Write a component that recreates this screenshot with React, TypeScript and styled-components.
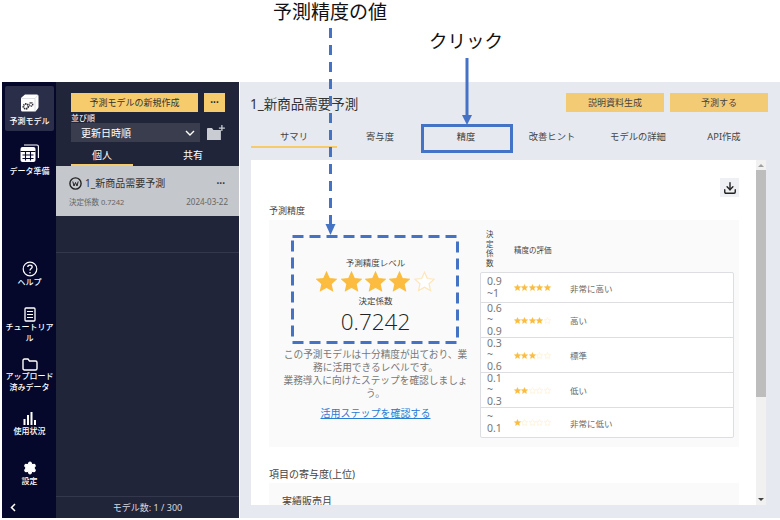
import React from "react";
import styled, { createGlobalStyle } from "styled-components";
import { Download, Settings } from "lucide-react";

const FONT = `"Noto Sans", "Noto Sans CJK JP", sans-serif`;

const tabs = ["サマリ", "寄与度", "精度", "改善ヒント", "モデルの詳細", "API作成"];

const levels = [
  { range: ["0.9", "~1"], stars: 5, label: "非常に高い" },
  { range: ["0.6", "~", "0.9"], stars: 4, label: "高い" },
  { range: ["0.3", "~", "0.6"], stars: 3, label: "標準" },
  { range: ["0.1", "~", "0.3"], stars: 2, label: "低い" },
  { range: ["~", "0.1"], stars: 1, label: "非常に低い" },
];

const ModelIcon = () => (
  <svg width="19" height="18" viewBox="0 0 19 18">
    <path d="M1 4.5 Q1 3.5 2 3 L5 0.5 H17 Q18.5 0.5 18.5 2 V13 Q18.5 14 17.5 15 L15.5 17.5 H2.5 Q1 17.5 1 16 Z" fill="#fff" />
    <path d="M1.5 4.5 H15 L18 1 M15 4.5 V17" stroke="#c8cad2" strokeWidth="0.6" fill="none" />
    <circle cx="5.8" cy="12.4" r="2.4" fill="none" stroke="#2c2c34" strokeWidth="1.8" strokeDasharray="1.3 0.6" />
    <circle cx="11" cy="10.4" r="1.7" fill="none" stroke="#2c2c34" strokeWidth="1.4" strokeDasharray="1 0.5" />
  </svg>
);

const GridIcon = () => (
  <svg width="19" height="18" viewBox="0 0 19 18" fill="none">
    <path d="M4 1 H17 Q18.4 1 18.4 2.5 V14" stroke="#fff" strokeWidth="1.1" />
    <rect x="0.5" y="3" width="15" height="15" rx="2" fill="#fff" />
    <path d="M0.5 7.5 H15.5 M2.5 11 H13.5 M2.5 14.5 H13.5 M5.5 7 V16.5 M10.5 7 V16.5" stroke="#05082a" strokeWidth="1.1" />
  </svg>
);

const HelpIcon = () => (
  <svg width="16" height="16" viewBox="0 0 16 16" fill="none" stroke="#fff">
    <circle cx="8" cy="8" r="6.8" strokeWidth="1.2" />
    <path d="M5.8 6 C5.8 3.6 10.2 3.6 10.2 6 C10.2 7.6 8 7.6 8 9.6" strokeWidth="1.3" />
    <circle cx="8" cy="11.8" r="0.8" fill="#fff" stroke="none" />
  </svg>
);

const DocIcon = () => (
  <svg width="12" height="15" viewBox="0 0 12 15" fill="none" stroke="#fff">
    <rect x="1" y="1" width="10" height="13" rx="1" strokeWidth="1.3" />
    <path d="M3 4.5 H9 M3 7.5 H9 M3 10.5 H9" strokeWidth="1.2" />
  </svg>
);

const FolderIcon = () => (
  <svg width="16" height="13" viewBox="0 0 16 13" fill="none" stroke="#fff" strokeWidth="1.4">
    <path d="M1 2.5 Q1 1 2.5 1 H6 L7.5 3 H13.5 Q15 3 15 4.5 V10.5 Q15 12 13.5 12 H2.5 Q1 12 1 10.5 Z" />
  </svg>
);

const BarsIcon = () => (
  <svg width="14" height="13" viewBox="0 0 14 13" fill="#fff">
    <rect x="0.5" y="7" width="2" height="6" />
    <rect x="4" y="3" width="2" height="10" />
    <rect x="7.5" y="0" width="2" height="13" />
    <rect x="11" y="8" width="2" height="5" />
  </svg>
);

const BackIcon = () => (
  <svg width="6" height="9" viewBox="0 0 6 9" fill="none" stroke="#fff" strokeWidth="1.5">
    <path d="M5 1 L1.5 4.5 L5 8" />
  </svg>
);

const CaretIcon = () => (
  <svg width="10" height="6" viewBox="0 0 10 6" fill="none" stroke="#fff" strokeWidth="1.4">
    <path d="M1 1 L5 5 L9 1" />
  </svg>
);

const FolderPlusIcon = () => (
  <svg width="19" height="15" viewBox="0 0 19 15" fill="#c9ccd2">
    <path d="M1 4 Q1 3 2 3 H6 L7.5 5 H15 V15 H1 Z" />
    <path d="M16 0 V6 M13 3 H19" stroke="#c9ccd2" strokeWidth="1.3" />
  </svg>
);

const ModelStatusIcon = () => (
  <svg width="13" height="13" viewBox="0 0 13 13" fill="none" stroke="#222">
    <circle cx="6.5" cy="6.5" r="5.6" strokeWidth="1.4" />
    <path d="M3.8 4.5 L5 9 L6.5 5.5 L8 9 L9.2 4.5" strokeWidth="1" />
  </svg>
);

const Star = ({ size, filled }: { size: number; filled: boolean }) => (
  <svg width={size} height={size} viewBox="0 0 24 24">
    <path
      d="M12 1.5 L15.2 8.6 L23 9.4 L17.2 14.6 L18.8 22.3 L12 18.4 L5.2 22.3 L6.8 14.6 L1 9.4 L8.8 8.6 Z"
      fill={filled ? "#fbbc3f" : "#fff"}
      stroke={filled ? "#fbbc3f" : "#fde6b8"}
      strokeWidth="1.4"
    />
  </svg>
);

const Annotations = () => (
  <>
    <NoteText $left={273} $top={-1} $size={19}>予測精度の値</NoteText>
    <NoteText $left={429} $top={28} $size={18.5}>クリック</NoteText>
    <NoteLines width="780" height="350" viewBox="0 0 780 350">
      <path d="M330.5 28 V226" stroke="#4472c4" strokeWidth="3" strokeDasharray="10 7" />
      <path d="M325.5 224 H335.5 L330.5 235 Z" fill="#4472c4" />
      <path d="M467 58 V116" stroke="#4472c4" strokeWidth="3" />
      <path d="M462 115 H472 L467 125 Z" fill="#4472c4" />
      <rect x="292.5" y="236.5" width="165" height="106" fill="none" stroke="#4472c4" strokeWidth="3" strokeDasharray="11 6" />
    </NoteLines>
    <ClickBox />
  </>
);

export default function App() {
  return (
    <Page>
      <GlobalStyle />
      <AppFrame>
        <SideNav>
          <NavGroup>
            <NavItem $active $height={45} $gap={4}><ModelIcon /><span>予測モデル</span></NavItem>
            <NavItem $height={33} $gap={4}><GridIcon /><span>データ準備</span></NavItem>
          </NavGroup>
          <NavBottom>
            <NavItem $height={32}><HelpIcon /><span>ヘルプ</span></NavItem>
            <NavItem $height={37}><DocIcon /><span>チュートリアル</span></NavItem>
            <NavItem $height={40}><FolderIcon /><span>アップロード<br />済みデータ</span></NavItem>
            <NavItem $height={35} $gap={1}><BarsIcon /><span>使用状況</span></NavItem>
            <NavItem $height={26} $gap={1}><Settings size={14} fill="#fff" color="#fff" /><span>設定</span></NavItem>
          </NavBottom>
          <Collapse><BackIcon /></Collapse>
        </SideNav>

        <ListPanel>
          <ListTop>
            <NewRow>
              <NewButton>予測モデルの新規作成</NewButton>
              <MoreButton>•••</MoreButton>
            </NewRow>
            <SortLabel>並び順</SortLabel>
            <SortRow>
              <SortSelect>更新日時順<CaretIcon /></SortSelect>
              <FolderPlusIcon />
            </SortRow>
            <OwnerTabs>
              <OwnerTab $active>個人</OwnerTab>
              <OwnerTab>共有</OwnerTab>
            </OwnerTabs>
          </ListTop>
          <ModelCard>
            <ModelName>
              <ModelStatusIcon />
              <span>1_新商品需要予測</span>
              <CardDots>•••</CardDots>
            </ModelName>
            <ModelMeta>
              <span>決定係数 0.7242</span>
              <MetaDate>2024-03-22</MetaDate>
            </ModelMeta>
          </ModelCard>
          <ListRule />
          <ListFooter>モデル数: 1 / 300</ListFooter>
        </ListPanel>

        <Main>
          <MainHeader>
            <Title>1_新商品需要予測</Title>
            <HeaderButton>説明資料生成</HeaderButton>
            <HeaderButton>予測する</HeaderButton>
          </MainHeader>
          <TabBar>
            {tabs.map((t, i) => (
              <Tab key={t} $active={i === 0}>{t}</Tab>
            ))}
          </TabBar>
          <Card>
            <CardBody>
              <ToolRow>
                <IconButton><Download size={14} color="#222" strokeWidth={2.4} /></IconButton>
              </ToolRow>
              <SectionTitle>予測精度</SectionTitle>
              <AccuracyPanel>
                <Summary>
                  <ValueArea>
                    <SmallLabel>予測精度レベル</SmallLabel>
                    <Stars>
                      {[1, 2, 3, 4, 5].map((n) => (
                        <Star key={n} size={21} filled={n <= 4} />
                      ))}
                    </Stars>
                    <SmallLabel>決定係数</SmallLabel>
                    <BigValue>0.7242</BigValue>
                  </ValueArea>
                  <Description>
                    この予測モデルは十分精度が出ており、業務に活用できるレベルです。
                    <br />
                    業務導入に向けたステップを確認しましょう。
                  </Description>
                  <StepLink>活用ステップを確認する</StepLink>
                </Summary>
                <LevelTable>
                  <LevelHead>
                    <HeadRange>決定係数</HeadRange>
                    <span>精度の評価</span>
                  </LevelHead>
                  <LevelBody>
                    {levels.map((l) => (
                      <LevelRow key={l.label} $lines={l.range.length}>
                        <RangeCell>
                          {l.range.map((r, i) => (
                            <div key={i}>{r}</div>
                          ))}
                        </RangeCell>
                        <MiniStars>
                          {[1, 2, 3, 4, 5].map((n) => (
                            <Star key={n} size={7} filled={n <= l.stars} />
                          ))}
                        </MiniStars>
                        <LevelLabel>{l.label}</LevelLabel>
                      </LevelRow>
                    ))}
                  </LevelBody>
                </LevelTable>
              </AccuracyPanel>
              <SecondTitle>項目の寄与度(上位)</SecondTitle>
              <ContribPanel>実績販売月</ContribPanel>
            </CardBody>
            <ScrollBar>
              <ScrollArrow $up />
              <ScrollThumb />
              <ScrollArrow />
            </ScrollBar>
          </Card>
        </Main>
      </AppFrame>
      <Annotations />
    </Page>
  );
}

const GlobalStyle = createGlobalStyle`
  html, body {
    margin: 0;
    padding: 0;
    background: #fff;
    font-family: ${FONT};
    overflow: hidden;
  }
`;

const Page = styled.div`
  position: relative;
  width: 780px;
  height: 520px;
  padding: 82px 0 2px 2px;
  box-sizing: border-box;
  overflow: hidden;
`;

const AppFrame = styled.div`
  display: flex;
  height: 436px;
  width: 778px;
`;

const SideNav = styled.nav`
  width: 54px;
  flex-shrink: 0;
  background: #05082a;
  display: flex;
  flex-direction: column;
  padding-top: 4px;
  box-sizing: border-box;
`;

const NavGroup = styled.div`
  display: flex;
  flex-direction: column;
  gap: 13px;
`;

const NavBottom = styled.div`
  display: flex;
  flex-direction: column;
  gap: 14px;
  margin-top: 84px;
`;

const NavItem = styled.div<{ $active?: boolean; $height: number; $gap?: number }>`
  width: 49px;
  height: ${(p) => p.$height}px;
  margin-left: 3px;
  background: ${(p) => (p.$active ? "#2a2e48" : "transparent")};
  border-radius: 2px;
  color: #fff;
  font-size: 8px;
  line-height: 10.5px;
  font-weight: 500;
  text-align: center;
  display: flex;
  flex-direction: column;
  align-items: center;
  padding-top: ${(p) => (p.$active ? 8 : 0)}px;
  box-sizing: border-box;
  gap: ${(p) => p.$gap ?? 0}px;
  svg {
    flex-shrink: 0;
  }
  span {
    display: block;
    width: 48px;
  }
`;

const Collapse = styled.div`
  margin-top: auto;
  height: 22px;
  padding-left: 8px;
  display: flex;
  align-items: center;
`;

const ListPanel = styled.aside`
  width: 183px;
  flex-shrink: 0;
  background: #212539;
  display: flex;
  flex-direction: column;
`;

const ListTop = styled.div`
  padding: 11px 14px 0 15px;
`;

const NewRow = styled.div`
  display: flex;
  gap: 6px;
`;

const NewButton = styled.div`
  width: 127px;
  height: 19px;
  background: #f5cb6c;
  color: #333;
  font-size: 9px;
  line-height: 19px;
  text-align: center;
`;

const MoreButton = styled.div`
  width: 21px;
  height: 19px;
  background: #f5cb6c;
  color: #222;
  font-size: 7.5px;
  line-height: 19px;
  text-align: center;
`;

const SortLabel = styled.div`
  color: #fff;
  font-size: 8px;
  line-height: 10px;
  margin-top: 1px;
`;

const SortRow = styled.div`
  display: flex;
  align-items: center;
  gap: 6px;
`;

const SortSelect = styled.div`
  width: 130px;
  height: 19px;
  background: #3a3d4d;
  color: #fff;
  font-size: 10px;
  box-sizing: border-box;
  padding: 0 5px 0 10px;
  display: flex;
  align-items: center;
  justify-content: space-between;
`;

const OwnerTabs = styled.div`
  display: flex;
  margin-top: 4px;
  width: 154px;
`;

const OwnerTab = styled.div<{ $active?: boolean }>`
  width: ${(p) => (p.$active ? 62 : 92)}px;
  height: 20px;
  box-sizing: border-box;
  color: #fff;
  font-size: 10px;
  line-height: 18px;
  text-align: center;
  padding-left: ${(p) => (p.$active ? 0 : 28)}px;
  border-bottom: 2px solid ${(p) => (p.$active ? "#f5cb6c" : "transparent")};
`;

const ModelCard = styled.div`
  height: 50px;
  background: #c4c7cb;
  padding: 10px 11px 0 13px;
  box-sizing: border-box;
`;

const ModelName = styled.div`
  display: flex;
  align-items: center;
  gap: 3px;
  color: #333;
  font-size: 10px;
  line-height: 15px;
`;

const CardDots = styled.span`
  margin-left: auto;
  font-size: 7.5px;
  margin-right: 3px;
`;

const ModelMeta = styled.div`
  display: flex;
  justify-content: space-between;
  color: #666;
  font-size: 7.5px;
  line-height: 10px;
  margin-top: 6px;
`;

const MetaDate = styled.span`
  font-size: 8px;
`;

const ListRule = styled.div`
  margin-top: 36px;
  height: 1px;
  background: #34384d;
`;

const ListFooter = styled.div`
  margin-top: auto;
  height: 21px;
  line-height: 22px;
  border-top: 1px solid #34384d;
  color: #d8dae0;
  font-size: 9px;
  text-align: center;
`;

const Main = styled.main`
  flex: 1;
  background: #e6e9ef;
  margin-left: 1px;
  padding: 11px 12px 0 11px;
  box-sizing: border-box;
  display: flex;
  flex-direction: column;
  min-width: 0;
`;

const MainHeader = styled.div`
  display: flex;
  align-items: center;
  gap: 6px;
  height: 19px;
`;

const Title = styled.h1`
  margin: 0 auto 0 -1px;
  font-size: 13.5px;
  font-weight: 400;
  color: #333;
`;

const HeaderButton = styled.div`
  width: 98px;
  height: 19px;
  background: #f3cb74;
  color: #444;
  font-size: 9px;
  line-height: 19px;
  text-align: center;
`;

const TabBar = styled.div`
  display: flex;
  margin-top: 15px;
  height: 21px;
`;

const Tab = styled.div<{ $active?: boolean }>`
  width: 86px;
  height: 21px;
  box-sizing: border-box;
  color: #444;
  font-size: 9.3px;
  line-height: 20px;
  text-align: center;
  border-bottom: 2px solid ${(p) => (p.$active ? "#f5cb6c" : "transparent")};
`;

const Card = styled.div`
  margin-top: 12px;
  height: 345px;
  width: 515px;
  background: #fff;
  display: flex;
  overflow: hidden;
`;

const CardBody = styled.div`
  flex: 1;
  min-width: 0;
  padding: 18px 17px 0 18px;
  box-sizing: border-box;
  color: #444;
`;

const ToolRow = styled.div`
  display: flex;
  justify-content: flex-end;
`;

const IconButton = styled.div`
  width: 19px;
  height: 19px;
  background: #eef0f3;
  display: flex;
  align-items: center;
  justify-content: center;
`;

const SectionTitle = styled.div`
  font-size: 9px;
  line-height: 12px;
  margin-top: 8px;
`;

const AccuracyPanel = styled.div`
  background: #fafafa;
  height: 227px;
  margin-top: 3px;
  display: flex;
  padding: 10px 5px 0 12px;
  box-sizing: border-box;
  gap: 10px;
`;

const Summary = styled.div`
  width: 189px;
  flex-shrink: 0;
  display: flex;
  flex-direction: column;
  align-items: center;
`;

const ValueArea = styled.div`
  height: 118px;
  padding-top: 27px;
  box-sizing: border-box;
  display: flex;
  flex-direction: column;
  align-items: center;
`;

const SmallLabel = styled.div`
  font-size: 8.5px;
  line-height: 12px;
  color: #444;
`;

const Stars = styled.div`
  display: flex;
  gap: 3.3px;
  height: 25px;
  margin-bottom: 1px;
  align-items: center;
`;

const BigValue = styled.div`
  font-size: 22.5px;
  font-weight: 300;
  line-height: 30px;
  color: #222;
  font-family: "Open Sans", "Noto Sans", sans-serif;
`;

const Description = styled.div`
  font-size: 9.7px;
  line-height: 13px;
  color: #777;
  text-align: center;
  width: 186px;
`;

const StepLink = styled.a`
  font-size: 10px;
  line-height: 13px;
  color: #2a7bd4;
  text-decoration: underline;
  margin-top: 7px;
`;

const LevelTable = styled.div`
  flex: 1;
  min-width: 0;
`;

const LevelHead = styled.div`
  display: flex;
  align-items: center;
  font-size: 7.5px;
  color: #444;
  height: 42px;
  padding-bottom: 4px;
  box-sizing: border-box;
`;

const HeadRange = styled.div`
  width: 34px;
  flex-shrink: 0;
  padding: 0 20px 0 6px;
  box-sizing: border-box;
  line-height: 9.5px;
  word-break: break-all;
`;

const LevelBody = styled.div`
  border: 1px solid #dcdee1;
  border-radius: 2px;
  background: #fff;
`;

const LevelRow = styled.div<{ $lines: number }>`
  display: flex;
  align-items: center;
  height: ${(p) => (p.$lines === 2 ? 30 : 35)}px;
  box-sizing: border-box;
  border-top: 1px solid #dcdee1;
  &:first-child {
    border-top: 0;
    height: 29px;
  }
`;

const RangeCell = styled.div`
  width: 33px;
  flex-shrink: 0;
  padding-left: 6px;
  box-sizing: border-box;
  font-size: 10.5px;
  line-height: 11.5px;
  color: #777;
`;

const MiniStars = styled.div`
  width: 56px;
  flex-shrink: 0;
  display: flex;
  gap: 0.4px;
`;

const LevelLabel = styled.div`
  font-size: 8.5px;
  color: #666;
`;

const SecondTitle = styled.div`
  font-size: 10px;
  line-height: 14px;
  margin-top: 20px;
`;

const ContribPanel = styled.div`
  background: #fafafa;
  margin-top: 2px;
  padding: 11px 13px;
  font-size: 10px;
  line-height: 14px;
  height: 40px;
  box-sizing: border-box;
`;

const ScrollBar = styled.div`
  width: 10px;
  flex-shrink: 0;
  background: #f1f1f1;
  display: flex;
  flex-direction: column;
  align-items: center;
`;

const ScrollArrow = styled.div<{ $up?: boolean }>`
  width: 0;
  height: 3px;
  box-sizing: border-box;
  border-left: 3px solid transparent;
  border-right: 3px solid transparent;
  ${(p) =>
    p.$up
      ? "border-bottom: 3px solid #a0a0a0; margin: 4px 0 3px;"
      : "border-top: 3px solid #444; margin: auto 0 4px;"}
`;

const ScrollThumb = styled.div`
  width: 100%;
  height: 227px;
  background: #bdbdbd;
`;

const NoteText = styled.div<{ $left: number; $top: number; $size: number }>`
  position: absolute;
  left: ${(p) => p.$left}px;
  top: ${(p) => p.$top}px;
  font-size: ${(p) => p.$size}px;
  line-height: 26px;
  color: #111;
  white-space: nowrap;
`;

const NoteLines = styled.svg`
  position: absolute;
  left: 0;
  top: 0;
`;

const ClickBox = styled.div`
  position: absolute;
  left: 421px;
  top: 124px;
  width: 92px;
  height: 29px;
  box-sizing: border-box;
  border: 3px solid #4472c4;
`;
